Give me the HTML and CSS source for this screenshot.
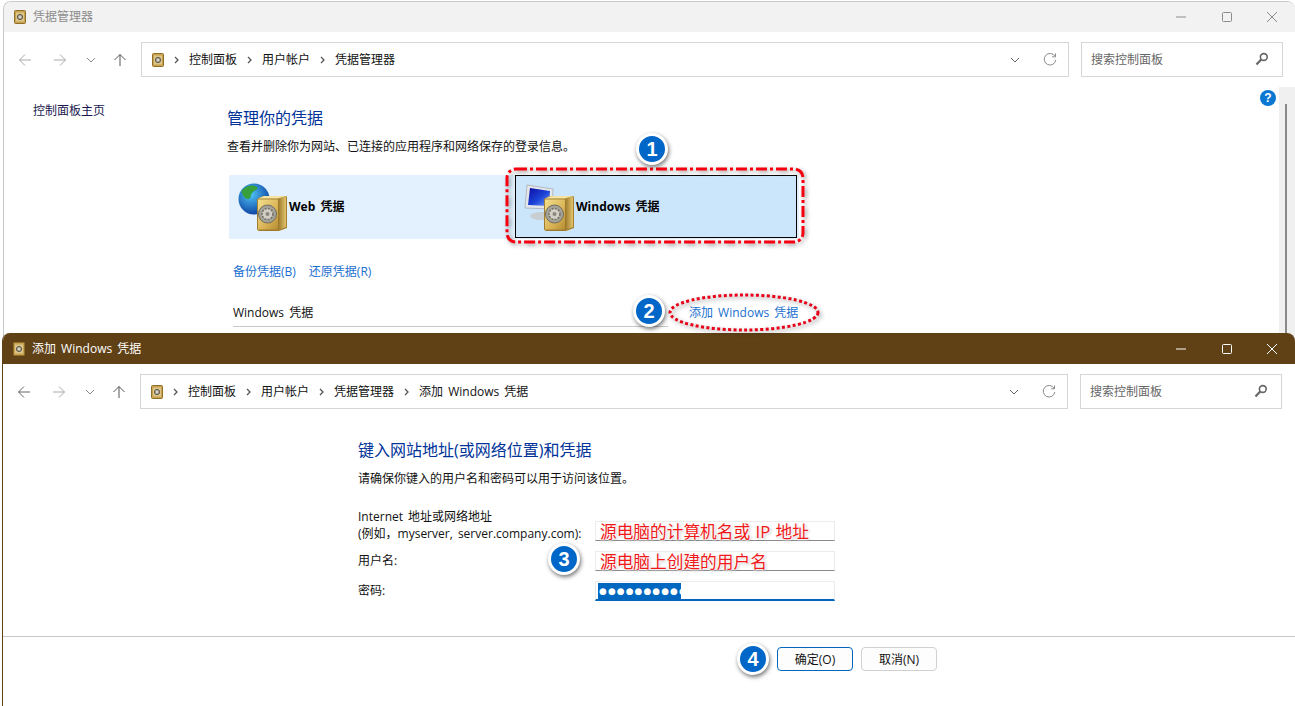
FILE: index.html
```html
<!DOCTYPE html>
<html lang="zh-CN">
<head>
  <meta charset="utf-8">
  <title>凭据管理器</title>
  <link rel="stylesheet" href="styles.css">
</head>
<body>

  <svg class="defs" width="0" height="0" aria-hidden="true">
    <defs>
      <linearGradient id="goldFront" x1="0" y1="0" x2="1" y2="1">
        <stop offset="0" stop-color="#f5e08e"/>
        <stop offset="0.6" stop-color="#d9b456"/>
        <stop offset="1" stop-color="#b48a30"/>
      </linearGradient>
      <linearGradient id="goldSide" x1="0" y1="0" x2="1" y2="0">
        <stop offset="0" stop-color="#9a7628"/>
        <stop offset="1" stop-color="#e2c46e"/>
      </linearGradient>
      <radialGradient id="globeFill" cx="0.4" cy="0.35" r="0.7">
        <stop offset="0" stop-color="#4fc4f5"/>
        <stop offset="1" stop-color="#0a3da0"/>
      </radialGradient>
      <linearGradient id="screenFill" x1="0" y1="0" x2="1" y2="1">
        <stop offset="0" stop-color="#0c0ca0"/>
        <stop offset="0.55" stop-color="#1c44d8"/>
        <stop offset="1" stop-color="#7aa4f5"/>
      </linearGradient>
      <symbol id="safe" viewBox="0 0 30 36">
        <path d="M0 4 L6 1 H29 L30 2 V33 L22 36 H2 L0 34Z" fill="#a5802f"/>
        <path d="M21 3 L29 1.5 V32 L21 35Z" fill="url(#goldSide)"/>
        <rect x="0.5" y="4" width="21" height="31" rx="1" fill="url(#goldFront)" stroke="#96752a" stroke-width="0.8"/>
        <path d="M1 3.5 L7 1 H29 L21 3.5Z" fill="#f5e3a2"/>
        <circle cx="10.5" cy="19" r="9" fill="#a5a297" stroke="#6f6b60"/>
        <circle cx="10.5" cy="19" r="5.5" fill="#d2d0c6" stroke="#77736a" stroke-width="1.6" stroke-dasharray="2 1.2"/>
        <circle cx="10.5" cy="19" r="2" fill="#8b877c"/>
      </symbol>
      <symbol id="miniSafe" viewBox="0 0 12 14">
        <rect x="0.5" y="0.5" width="11" height="13" rx="1" fill="#c9a24f" stroke="#8f6f2a"/>
        <rect x="2" y="2.5" width="8" height="9" fill="#dcc48a"/>
        <circle cx="6" cy="7" r="2.6" fill="#b0aa98" stroke="#5f5a4c"/>
        <circle cx="6" cy="7" r="0.9" fill="#efe9d8"/>
      </symbol>
      <symbol id="arrowLeft" viewBox="0 0 14 14">
        <path d="M13 7H1.5M7 1.5 1.5 7 7 12.5" fill="none" stroke="currentColor" stroke-width="1"/>
      </symbol>
      <symbol id="arrowRight" viewBox="0 0 14 14">
        <path d="M1 7h11.5M7 1.5 12.5 7 7 12.5" fill="none" stroke="currentColor" stroke-width="1"/>
      </symbol>
      <symbol id="arrowUp" viewBox="0 0 14 14">
        <path d="M7 13V1.5M1.5 7 7 1.5 12.5 7" fill="none" stroke="currentColor" stroke-width="1"/>
      </symbol>
      <symbol id="chevDown" viewBox="0 0 10 6">
        <path d="M1 1 5 5 9 1" fill="none" stroke="currentColor" stroke-width="1"/>
      </symbol>
      <symbol id="chevRight" viewBox="0 0 6 8">
        <path d="M1.5 1 4.5 4 1.5 7" fill="none" stroke="currentColor" stroke-width="1.3"/>
      </symbol>
      <symbol id="refresh" viewBox="0 0 14 14">
        <path d="M12 3.2A5.8 5.8 0 1 0 12.8 7" fill="none" stroke="currentColor" stroke-width="1"/>
        <path d="M12.5 0.5V3.8H9.2" fill="none" stroke="currentColor" stroke-width="1"/>
      </symbol>
      <symbol id="search" viewBox="0 0 14 14">
        <circle cx="8.8" cy="5" r="3.4" fill="none" stroke="currentColor" stroke-width="1.6"/>
        <path d="M6.2 7.6 1.5 12.5" fill="none" stroke="currentColor" stroke-width="2.2"/>
      </symbol>
      <symbol id="winMin" viewBox="0 0 10 10">
        <path d="M0 5h10" fill="none" stroke="currentColor" stroke-width="1"/>
      </symbol>
      <symbol id="winMax" viewBox="0 0 10 10">
        <rect x="0.5" y="0.5" width="9" height="9" rx="1" fill="none" stroke="currentColor" stroke-width="1"/>
      </symbol>
      <symbol id="winClose" viewBox="0 0 10 10">
        <path d="M0 0 10 10M10 0 0 10" fill="none" stroke="currentColor" stroke-width="1"/>
      </symbol>
    </defs>
  </svg>

  <!-- back window -->
  <div class="window window-back">
    <div class="titlebar">
      <svg class="title-icon"><use href="#miniSafe"/></svg>
      <span class="title-text">凭据管理器</span>
      <div class="win-buttons">
        <span class="win-btn"><svg><use href="#winMin"/></svg></span>
        <span class="win-btn"><svg><use href="#winMax"/></svg></span>
        <span class="win-btn"><svg><use href="#winClose"/></svg></span>
      </div>
    </div>
    <div class="toolbar">
      <div class="nav">
        <span class="nav-btn nav-back"><svg><use href="#arrowLeft"/></svg></span>
        <span class="nav-btn nav-forward"><svg><use href="#arrowRight"/></svg></span>
        <span class="nav-btn nav-recent"><svg class="chev"><use href="#chevDown"/></svg></span>
        <span class="nav-btn nav-up"><svg><use href="#arrowUp"/></svg></span>
      </div>
      <div class="address">
        <svg class="crumb-icon"><use href="#miniSafe"/></svg>
        <svg class="crumb-sep"><use href="#chevRight"/></svg>
        <span>控制面板</span>
        <svg class="crumb-sep"><use href="#chevRight"/></svg>
        <span>用户帐户</span>
        <svg class="crumb-sep"><use href="#chevRight"/></svg>
        <span>凭据管理器</span>
        <svg class="addr-chev"><use href="#chevDown"/></svg>
        <svg class="addr-refresh"><use href="#refresh"/></svg>
      </div>
      <div class="searchbox">
        <span>搜索控制面板</span>
        <svg><use href="#search"/></svg>
      </div>
    </div>
    <div class="panel">
      <div class="sidebar">控制面板主页</div>
      <div class="main">
        <h1 class="page-title">管理你的凭据</h1>
        <p class="page-sub">查看并删除你为网站、已连接的应用程序和网络保存的登录信息。</p>
        <div class="tiles">
          <div class="tile tile-web">
            <svg class="tile-icon" viewBox="0 0 52 50">
              <circle cx="17" cy="17" r="15.5" fill="url(#globeFill)"/>
              <path d="M9 5c4-2 9-2 11 0s-3 3-5 6-1 6-4 6-5-3-6-6 1-4 4-6ZM22 20c3-1 6 0 6 2s-4 5-6 4-2-5 0-6Z" fill="#38a03a"/>
              <use href="#safe" x="20" y="13" width="30" height="36"/>
            </svg>
            <span class="tile-text">Web 凭据</span>
          </div>
          <div class="tile tile-windows">
            <svg class="tile-icon" viewBox="0 0 52 50">
              <ellipse cx="17" cy="34" rx="11" ry="4" fill="#c9ced2"/>
              <path d="M3 3 29 7 28 27 1 26Z" fill="#e4e7ea" stroke="#a8adb2" stroke-width="0.8"/>
              <path d="M6 6 26 9 25 24 4 23Z" fill="url(#screenFill)"/>
              <use href="#safe" x="20" y="13" width="30" height="36"/>
            </svg>
            <span class="tile-text">Windows 凭据</span>
          </div>
        </div>
        <div class="links">
          <a class="link">备份凭据(B)</a>
          <a class="link">还原凭据(R)</a>
        </div>
        <div class="vault-row">
          <div class="vault-name">Windows 凭据</div>
          <a class="link add-link">添加 Windows 凭据</a>
        </div>
      </div>
      <svg class="help" viewBox="0 0 16 16">
        <circle cx="8" cy="8" r="8" fill="#0a78d2"/>
        <text class="help-mark" x="8" y="12">?</text>
      </svg>
      <div class="scrollbar"><div class="scroll-thumb"></div></div>
    </div>
  </div>

  <!-- front window -->
  <div class="window window-front">
    <div class="titlebar">
      <svg class="title-icon"><use href="#miniSafe"/></svg>
      <span class="title-text">添加 Windows 凭据</span>
      <div class="win-buttons">
        <span class="win-btn"><svg><use href="#winMin"/></svg></span>
        <span class="win-btn"><svg><use href="#winMax"/></svg></span>
        <span class="win-btn"><svg><use href="#winClose"/></svg></span>
      </div>
    </div>
    <div class="toolbar">
      <div class="nav">
        <span class="nav-btn nav-back nav-active"><svg><use href="#arrowLeft"/></svg></span>
        <span class="nav-btn nav-forward"><svg><use href="#arrowRight"/></svg></span>
        <span class="nav-btn nav-recent"><svg class="chev"><use href="#chevDown"/></svg></span>
        <span class="nav-btn nav-up"><svg><use href="#arrowUp"/></svg></span>
      </div>
      <div class="address">
        <svg class="crumb-icon"><use href="#miniSafe"/></svg>
        <svg class="crumb-sep"><use href="#chevRight"/></svg>
        <span>控制面板</span>
        <svg class="crumb-sep"><use href="#chevRight"/></svg>
        <span>用户帐户</span>
        <svg class="crumb-sep"><use href="#chevRight"/></svg>
        <span>凭据管理器</span>
        <svg class="crumb-sep"><use href="#chevRight"/></svg>
        <span>添加 Windows 凭据</span>
        <svg class="addr-chev"><use href="#chevDown"/></svg>
        <svg class="addr-refresh"><use href="#refresh"/></svg>
      </div>
      <div class="searchbox">
        <span>搜索控制面板</span>
        <svg><use href="#search"/></svg>
      </div>
    </div>
    <div class="dialog">
      <h2 class="dialog-title">键入网站地址(或网络位置)和凭据</h2>
      <p class="dialog-sub">请确保你键入的用户名和密码可以用于访问该位置。</p>
      <div class="field field-address">
        <label class="field-label">Internet 地址或网络地址<br>(例如，myserver, server.company.com):</label>
        <div class="input">
          <span class="note">源电脑的计算机名或 IP 地址</span>
        </div>
      </div>
      <div class="field">
        <label class="field-label">用户名:</label>
        <div class="input">
          <span class="note">源电脑上创建的用户名</span>
        </div>
      </div>
      <div class="field">
        <label class="field-label">密码:</label>
        <div class="input input-focus">
          <span class="selected">●●●●●●●●●●</span>
        </div>
      </div>
    </div>
    <div class="footer">
      <button class="btn btn-default">确定(O)</button>
      <button class="btn">取消(N)</button>
    </div>
  </div>

  <!-- annotations over the screenshot -->
  <svg class="marks" viewBox="0 0 1295 706">
    <rect class="mark-rect" x="507" y="169" width="296" height="73" rx="9"/>
    <ellipse class="mark-oval" cx="744" cy="312.5" rx="74" ry="17.5"/>
  </svg>
  <div class="badge badge-1">1</div>
  <div class="badge badge-2">2</div>
  <div class="badge badge-3">3</div>
  <div class="badge badge-4">4</div>

</body>
</html>
```

FILE: styles.css
```css
* {
  box-sizing: border-box;
}
html, body {
  margin: 0;
  height: 706px;
  overflow: hidden;
}
body {
  position: relative;
  width: 1295px;
  background: #fff;
  font-family: "Open Sans", "Noto Sans CJK SC", sans-serif;
  font-size: 12px;
  word-spacing: 2px;
  color: #111;
}
.defs {
  position: absolute;
}

/* windows */
.window {
  position: absolute;
  background: #fff;
  display: flex;
  flex-direction: column;
  border-radius: 8px 8px 0 0;
  overflow: hidden;
}
.window-back {
  left: 3px;
  top: 1px;
  width: 1292px;
  height: 345px;
  border-top: 1px solid #c9c9c9;
  border-left: 1px solid #c9c9c9;
}
.window-front {
  left: 2px;
  top: 333px;
  width: 1293px;
  height: 373px;
  border-left: 1px solid #604116;
}

.titlebar {
  display: flex;
  align-items: center;
  height: 31px;
  flex: none;
  padding-left: 10px;
  background: #f2f2f2;
  color: #8c8c8c;
}
.window-back .titlebar {
  height: 30px;
}
.window-front .titlebar {
  background: #604116;
  color: #fff;
}
.title-text {
  margin-top: -2px;
}
.title-icon {
  width: 12px;
  height: 14px;
  margin-right: 7px;
}
.win-buttons {
  display: flex;
  margin-left: auto;
}
.win-btn {
  width: 46px;
  height: 30px;
  display: flex;
  align-items: center;
  justify-content: center;
}
.win-btn:nth-child(2) {
  width: 45px;
}
.win-btn svg {
  width: 10px;
  height: 10px;
}

/* toolbar */
.toolbar {
  display: flex;
  align-items: center;
  gap: 12px;
  height: 55px;
  flex: none;
  padding: 0 12px 0 4px;
}
.window-front .toolbar {
  padding-right: 13px;
}
.nav {
  display: flex;
  margin-right: -7px;
  color: #a9a9a9;
}
.nav-btn {
  display: flex;
  align-items: center;
  justify-content: center;
  height: 20px;
}
.nav-btn svg {
  width: 14px;
  height: 14px;
}
.nav-btn .chev {
  width: 10px;
  height: 6px;
  color: #8a8a8a;
}
.nav-back { width: 34px; }
.nav-forward { width: 36px; }
.nav-recent { width: 26px; }
.nav-up { width: 32px; color: #555; }
.nav-active { color: #666; }

.address {
  flex: 1;
  display: flex;
  align-items: center;
  height: 35px;
  padding: 0 10px 2px;
  border: 1px solid #d6d6d6;
  color: #111;
}
.crumb-icon {
  width: 12px;
  height: 14px;
  margin-top: 2px;
}
.crumb-sep {
  width: 25px;
  height: 8px;
  margin-top: 2px;
  color: #555;
}
.addr-chev {
  width: 10px;
  height: 6px;
  margin-left: auto;
  margin-top: 2px;
  color: #666;
}
.addr-refresh {
  width: 14px;
  height: 14px;
  margin: 2px 1px 0 23px;
  color: #8a8a8a;
}
.searchbox {
  display: flex;
  align-items: center;
  justify-content: space-between;
  width: 202px;
  height: 35px;
  padding: 0 13px 2px 9px;
  border: 1px solid #d6d6d6;
  color: #666;
}
.searchbox svg {
  width: 14px;
  height: 14px;
  margin-top: 1px;
  color: #666;
}

/* credential panel */
.panel {
  flex: 1;
  display: flex;
}
.sidebar {
  width: 223px;
  flex: none;
  padding: 14px 0 0 29px;
  line-height: 20px;
  color: #1a1a50;
}
.main {
  flex: 1;
  padding-top: 19px;
}
.page-title {
  margin: 0;
  font-size: 16px;
  font-weight: 400;
  line-height: 24px;
  color: #003399;
}
.page-sub {
  margin: 7px 0 18px;
  line-height: 20px;
}
.tiles {
  display: flex;
  margin-left: 2px;
  width: 570px;
  height: 64px;
  background: #e2f1fd;
  border-radius: 2px;
}
.tile {
  display: flex;
  align-items: center;
  font-weight: 700;
  color: #000;
}
.tile-text {
  margin-top: -2px;
}
.tile-web {
  width: 286px;
  padding-left: 8px;
}
.tile-windows {
  width: 282px;
  height: 63px;
  padding-left: 8px;
  background: #cbe5fb;
  border: 1px solid #000;
}
.tile-icon {
  width: 52px;
  height: 50px;
  flex: none;
}
.links {
  display: flex;
  gap: 13px;
  margin: 23px 0 21px 6px;
  line-height: 20px;
}
.link {
  color: #1a6fd0;
}
.vault-row {
  display: flex;
  margin-left: 6px;
}
.vault-name {
  width: 435px;
  height: 24px;
  line-height: 20px;
  border-bottom: 1px solid #c8c8c8;
}
.add-link {
  margin-left: 21px;
  line-height: 20px;
}
.help {
  width: 16px;
  height: 16px;
  flex: none;
  margin: 3px 3px 0 0;
}
.help-mark {
  font-family: "Liberation Sans", sans-serif;
  font-size: 12px;
  font-weight: 700;
  fill: #fff;
  text-anchor: middle;
}
.scrollbar {
  width: 16px;
  flex: none;
  padding: 17px 0 0 6px;
  background: #f0f0f0;
}
.scroll-thumb {
  width: 2px;
  height: 230px;
  background: #8a8a8a;
}

/* add credential dialog */
.dialog {
  flex: 1;
  padding: 19px 0 0 355px;
}
.dialog-title {
  margin: 0;
  font-size: 16px;
  font-weight: 400;
  line-height: 24px;
  color: #003399;
}
.dialog-sub {
  margin: 7px 0 18px;
  line-height: 20px;
}
.field {
  display: flex;
  align-items: center;
  height: 20px;
  margin-bottom: 10px;
}
.field-address {
  align-items: flex-end;
  height: 34px;
}
.field-label {
  width: 237px;
  flex: none;
  line-height: 17px;
  margin-top: -1px;
}
.field-address .field-label {
  margin-top: 0;
  margin-bottom: -1px;
}
.input {
  position: relative;
  display: flex;
  align-items: center;
  width: 240px;
  height: 20px;
  padding-left: 2px;
  background: #fff;
  border: 1px solid #ececec;
  border-bottom: 1px solid #8a8a8a;
}
.input-focus {
  border-bottom: 2px solid #0067c0;
}
.note {
  position: absolute;
  left: 4px;
  top: -2px;
  white-space: nowrap;
  font-size: 16.7px;
  line-height: 24px;
  word-spacing: 1px;
  color: #f01818;
  text-shadow: 0 0 2px #fff, 0 0 2px #fff, 0 0 3px #fff, 0 0 3px #fff, 1px 1px 3px rgba(0, 0, 0, .4);
}
.selected {
  height: 16px;
  width: 83px;
  font-family: "DejaVu Sans", sans-serif;
  font-size: 8.8px;
  line-height: 16px;
  letter-spacing: 1.2px;
  padding-left: 1px;
  white-space: nowrap;
  background: #0067c0;
  color: #fff;
}
.footer {
  flex: none;
  display: flex;
  gap: 8px;
  height: 70px;
  padding: 10px 0 0 774px;
  border-top: 1px solid #c8c8c8;
}
.btn {
  width: 76px;
  height: 24px;
  padding: 0;
  background: #fdfdfd;
  border: 1px solid #d0d0d0;
  border-radius: 4px;
  font: inherit;
  color: #111;
}
.btn-default {
  border-color: #0067c0;
}

/* annotations */
.marks {
  position: absolute;
  left: 0;
  top: 0;
  width: 1295px;
  height: 706px;
  pointer-events: none;
  filter: drop-shadow(2px 2px 2px rgba(0, 0, 0, .4));
}
.mark-rect {
  fill: none;
  stroke: #f60010;
  stroke-width: 3;
  stroke-dasharray: 11 3 3 3;
}
.mark-oval {
  fill: none;
  stroke: #e80018;
  stroke-width: 3;
  stroke-dasharray: 3 2.4;
}
.badge {
  position: absolute;
  width: 32px;
  height: 32px;
  display: flex;
  align-items: center;
  justify-content: center;
  border: 3px solid #fff;
  border-radius: 50%;
  background: #0066c8;
  box-shadow: 1px 2px 4px rgba(0, 0, 0, .55);
  font-family: "Liberation Sans", sans-serif;
  font-size: 20px;
  font-weight: 700;
  color: #fff;
}
.badge-1 { left: 636px; top: 133px; }
.badge-2 { left: 633px; top: 295px; }
.badge-3 { left: 548px; top: 543px; }
.badge-4 { left: 737px; top: 643px; }
```
